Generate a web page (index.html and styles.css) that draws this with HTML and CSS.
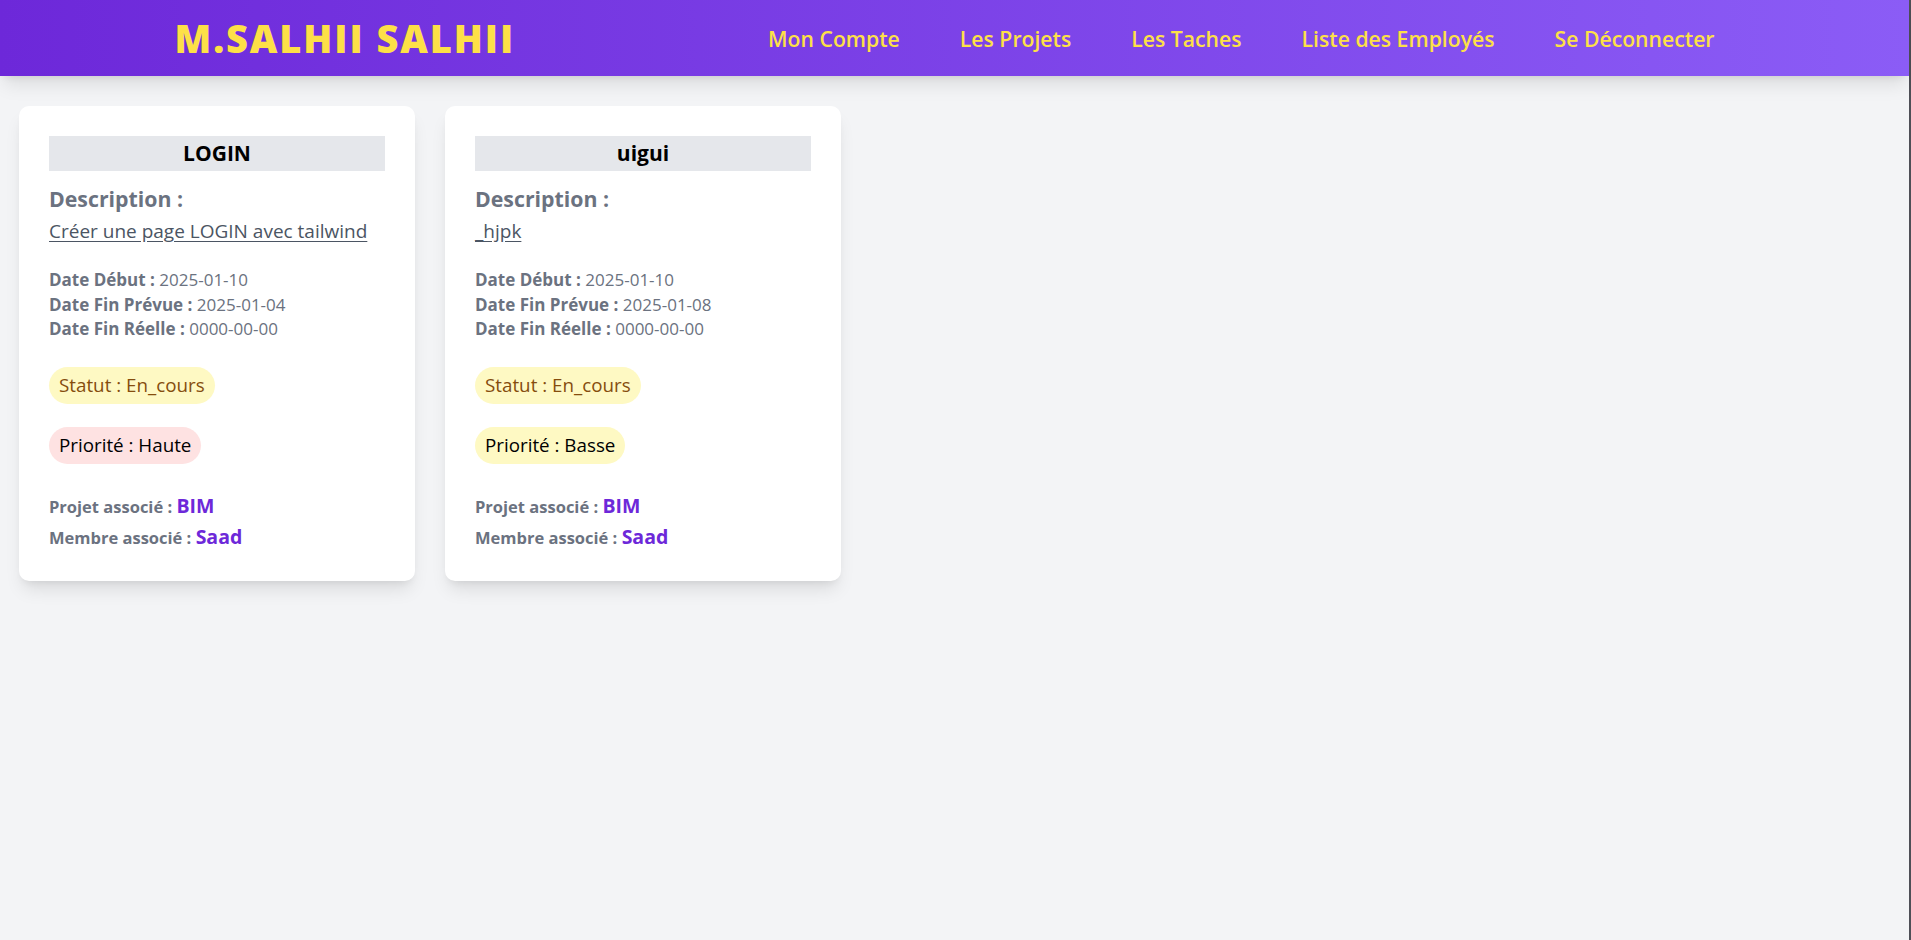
FILE: index.html
```html
<!DOCTYPE html>
<html lang="fr">
<head>
<meta charset="utf-8">
<title>Les Taches</title>
<link rel="stylesheet" href="styles.css">
</head>
<body>
<div class="frame">
  <header class="topbar">
    <div class="topbar-inner">
      <h1 class="brand">M.SALHII SALHII</h1>
      <nav class="nav">
        <a class="nav-link" href="#">Mon Compte</a>
        <a class="nav-link" href="#">Les Projets</a>
        <a class="nav-link" href="#">Les Taches</a>
        <a class="nav-link" href="#">Liste des Employés</a>
        <a class="nav-link" href="#">Se Déconnecter</a>
      </nav>
    </div>
  </header>

  <main class="tasks">
    <article class="card">
      <h2 class="card-title">LOGIN</h2>
      <h3 class="desc-label">Description :</h3>
      <p class="desc-text">Créer une page LOGIN avec tailwind</p>
      <div class="dates">
        <p><b>Date Début :</b> 2025-01-10</p>
        <p><b>Date Fin Prévue :</b> 2025-01-04</p>
        <p><b>Date Fin Réelle :</b> 0000-00-00</p>
      </div>
      <div class="pill-row"><span class="pill pill-status">Statut : En_cours</span></div>
      <div class="pill-row"><span class="pill pill-high">Priorité : Haute</span></div>
      <div class="assoc">
        <p><b>Projet associé :</b> <span class="assoc-val">BIM</span></p>
        <p><b>Membre associé :</b> <span class="assoc-val">Saad</span></p>
      </div>
    </article>

    <article class="card">
      <h2 class="card-title">uigui</h2>
      <h3 class="desc-label">Description :</h3>
      <p class="desc-text">_hjpk</p>
      <div class="dates">
        <p><b>Date Début :</b> 2025-01-10</p>
        <p><b>Date Fin Prévue :</b> 2025-01-08</p>
        <p><b>Date Fin Réelle :</b> 0000-00-00</p>
      </div>
      <div class="pill-row"><span class="pill pill-status">Statut : En_cours</span></div>
      <div class="pill-row"><span class="pill pill-low">Priorité : Basse</span></div>
      <div class="assoc">
        <p><b>Projet associé :</b> <span class="assoc-val">BIM</span></p>
        <p><b>Membre associé :</b> <span class="assoc-val">Saad</span></p>
      </div>
    </article>
  </main>
</div>
</body>
</html>
```

FILE: styles.css
```css
* { box-sizing: border-box; }

html, body {
  margin: 0;
  padding: 0;
}

body {
  font-family: "Open Sans", "Noto Sans", "Liberation Sans", sans-serif;
  background: #f3f4f6;
  color: #111827;
}

.frame {
  min-height: 100vh;
  background: #f3f4f6;
  border-right: 2px solid #4e4f56;
}

.topbar {
  height: 76px;
  background: linear-gradient(to right, #6d28d9, #8b5cf6);
  box-shadow: 0 12px 18px -4px rgba(0, 0, 0, 0.1), 0 5px 8px -5px rgba(0, 0, 0, 0.1);
  position: relative;
  z-index: 1;
}

.topbar-inner {
  max-width: 1600px;
  height: 100%;
  margin: 0 auto;
  padding: 0 20px;
  display: flex;
  align-items: center;
  justify-content: space-between;
}

.brand {
  margin: 0;
  color: #fde047;
  font-size: 38px;
  font-weight: 800;
  letter-spacing: 1.9px;
  line-height: 1;
}

.nav {
  display: flex;
  gap: 20px;
}

.nav-link {
  padding: 0 20px;
  color: #fde047;
  font-size: 21.2px;
  font-weight: 600;
  text-decoration: none;
}

.tasks {
  display: flex;
  flex-wrap: wrap;
  align-items: flex-start;
  gap: 30px;
  padding: 30px 19px;
}

.card {
  width: 396px;
  background: #ffffff;
  border-radius: 10px;
  padding: 30px 30px 28px;
  box-shadow: 0 12px 18px -4px rgba(0, 0, 0, 0.1), 0 5px 8px -5px rgba(0, 0, 0, 0.1);
}

.card-title {
  margin: 0;
  background: #e5e7eb;
  color: #000;
  text-align: center;
  font-size: 21px;
  font-weight: 700;
  line-height: 35px;
  height: 35px;
}

.desc-label {
  margin: 10px 0 0;
  color: #6b7280;
  font-size: 21.3px;
  font-weight: 700;
  line-height: 35px;
}

.desc-text {
  margin: 0;
  color: #4b5563;
  font-size: 19px;
  line-height: 30px;
  text-decoration: underline;
  text-underline-offset: 3px;
}

.dates {
  margin-top: 22px;
  color: #6b7280;
  font-size: 17px;
  line-height: 24.5px;
}

.dates p, .assoc p {
  margin: 0;
}

.dates b, .assoc b {
  font-weight: 700;
}

.pill-row {
  margin-top: 25px;
}

.pill-row + .pill-row {
  margin-top: 23px;
}

.pill {
  display: inline-block;
  height: 37px;
  line-height: 37px;
  padding: 0 10px;
  border-radius: 999px;
  font-size: 18.8px;
}

.pill-status {
  background: #fef9c3;
  color: #854d0e;
}

.pill-high {
  background: #fee2e2;
  color: #000;
}

.pill-low {
  background: #fef9c3;
  color: #000;
}

.assoc {
  margin-top: 27px;
  color: #6b7280;
  font-size: 16.5px;
  line-height: 30px;
}

.assoc-val {
  color: #6d28d9;
  font-weight: 700;
  font-size: 19.5px;
}
```
